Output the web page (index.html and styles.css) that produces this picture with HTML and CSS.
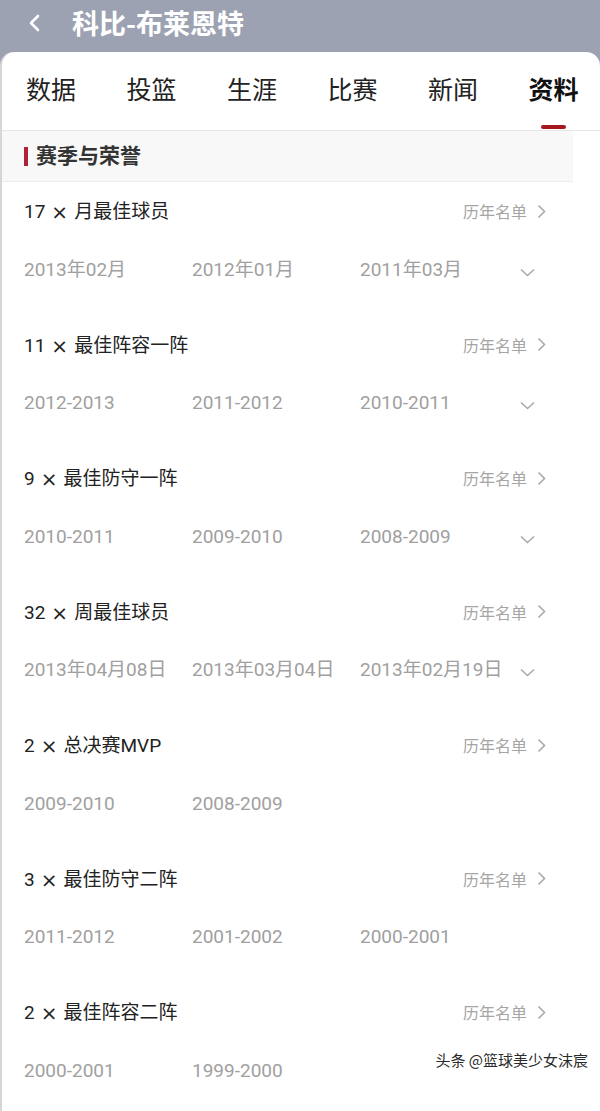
FILE: index.html
```html
<!DOCTYPE html>
<html lang="zh">
<head>
<meta charset="utf-8">
<link rel="stylesheet" href="styles.css">
</head>
<body>
<div class="page">
  <header class="topbar">
    <svg class="back" width="14" height="18" viewBox="0 0 14 18"><path d="M11 2 L4 9 L11 16" fill="none" stroke="#fff" stroke-width="2.6" stroke-linecap="round" stroke-linejoin="round"/></svg>
    <h1 class="title">科比-布莱恩特</h1>
  </header>
  <main class="card">
    <nav class="tabs">
      <span class="tab">数据</span>
      <span class="tab">投篮</span>
      <span class="tab">生涯</span>
      <span class="tab">比赛</span>
      <span class="tab">新闻</span>
      <span class="tab active">资料</span>
    </nav>
    <div class="section-head"><span class="bar"></span><span class="section-title">赛季与荣誉</span></div>

    <div class="item">
      <div class="item-top"><span class="item-title">17<span class="times">×</span>月最佳球员</span><span class="history">历年名单<svg class="chev-r" width="9" height="15" viewBox="0 0 9 15"><path d="M1.5 1.5 L7.5 7.5 L1.5 13.5" fill="none" stroke="#aaa" stroke-width="1.6"/></svg></span></div>
      <div class="dates"><span>2013年02月</span><span>2012年01月</span><span>2011年03月</span><svg class="chev-d" width="15" height="9" viewBox="0 0 15 9"><path d="M1 1.5 L7.5 7.5 L14 1.5" fill="none" stroke="#aaa" stroke-width="1.6"/></svg></div>
    </div>

    <div class="item">
      <div class="item-top"><span class="item-title">11<span class="times">×</span>最佳阵容一阵</span><span class="history">历年名单<svg class="chev-r" width="9" height="15" viewBox="0 0 9 15"><path d="M1.5 1.5 L7.5 7.5 L1.5 13.5" fill="none" stroke="#aaa" stroke-width="1.6"/></svg></span></div>
      <div class="dates"><span>2012-2013</span><span>2011-2012</span><span>2010-2011</span><svg class="chev-d" width="15" height="9" viewBox="0 0 15 9"><path d="M1 1.5 L7.5 7.5 L14 1.5" fill="none" stroke="#aaa" stroke-width="1.6"/></svg></div>
    </div>

    <div class="item">
      <div class="item-top"><span class="item-title">9<span class="times">×</span>最佳防守一阵</span><span class="history">历年名单<svg class="chev-r" width="9" height="15" viewBox="0 0 9 15"><path d="M1.5 1.5 L7.5 7.5 L1.5 13.5" fill="none" stroke="#aaa" stroke-width="1.6"/></svg></span></div>
      <div class="dates"><span>2010-2011</span><span>2009-2010</span><span>2008-2009</span><svg class="chev-d" width="15" height="9" viewBox="0 0 15 9"><path d="M1 1.5 L7.5 7.5 L14 1.5" fill="none" stroke="#aaa" stroke-width="1.6"/></svg></div>
    </div>

    <div class="item">
      <div class="item-top"><span class="item-title">32<span class="times">×</span>周最佳球员</span><span class="history">历年名单<svg class="chev-r" width="9" height="15" viewBox="0 0 9 15"><path d="M1.5 1.5 L7.5 7.5 L1.5 13.5" fill="none" stroke="#aaa" stroke-width="1.6"/></svg></span></div>
      <div class="dates"><span>2013年04月08日</span><span>2013年03月04日</span><span>2013年02月19日</span><svg class="chev-d" width="15" height="9" viewBox="0 0 15 9"><path d="M1 1.5 L7.5 7.5 L14 1.5" fill="none" stroke="#aaa" stroke-width="1.6"/></svg></div>
    </div>

    <div class="item">
      <div class="item-top"><span class="item-title">2<span class="times">×</span>总决赛MVP</span><span class="history">历年名单<svg class="chev-r" width="9" height="15" viewBox="0 0 9 15"><path d="M1.5 1.5 L7.5 7.5 L1.5 13.5" fill="none" stroke="#aaa" stroke-width="1.6"/></svg></span></div>
      <div class="dates"><span>2009-2010</span><span>2008-2009</span></div>
    </div>

    <div class="item">
      <div class="item-top"><span class="item-title">3<span class="times">×</span>最佳防守二阵</span><span class="history">历年名单<svg class="chev-r" width="9" height="15" viewBox="0 0 9 15"><path d="M1.5 1.5 L7.5 7.5 L1.5 13.5" fill="none" stroke="#aaa" stroke-width="1.6"/></svg></span></div>
      <div class="dates"><span>2011-2012</span><span>2001-2002</span><span>2000-2001</span></div>
    </div>

    <div class="item">
      <div class="item-top"><span class="item-title">2<span class="times">×</span>最佳阵容二阵</span><span class="history">历年名单<svg class="chev-r" width="9" height="15" viewBox="0 0 9 15"><path d="M1.5 1.5 L7.5 7.5 L1.5 13.5" fill="none" stroke="#aaa" stroke-width="1.6"/></svg></span></div>
      <div class="dates"><span>2000-2001</span><span>1999-2000</span></div>
    </div>
  </main>
  <div class="watermark">头条 @篮球美少女沫宸</div>
</div>
</body>
</html>
```

FILE: styles.css
```css
* { box-sizing: border-box; }
html, body { margin: 0; padding: 0; }
body {
  font-family: Roboto, "Noto Sans CJK SC", sans-serif;
  background: #fff;
  width: 600px;
  height: 1111px;
  overflow: hidden;
}
.page {
  position: relative;
  background: #9da2b2;
  height: 1111px;
}
.topbar {
  height: 52px;
  display: flex;
  align-items: center;
  padding-left: 27px;
}
.back { margin-right: 31px; margin-top: -6px; }
.title {
  margin: 0;
  color: #fff;
  font-size: 27px;
  font-weight: 700;
  line-height: 1;
  margin-top: -8px;
  font-family: "Noto Sans CJK SC", sans-serif;
}
.card {
  background: #fff;
  border-radius: 14px 14px 0 0;
  border-left: 2px solid #d6d6d6;
  height: 1059px;
}
.tabs {
  height: 79px;
  display: flex;
  gap: 50.5px;
  padding: 0 0 6px 24px;
  align-items: center;
  border-bottom: 1px solid #e6e6e6;
}
.tab {
  position: relative;
  width: 50px;
  font-size: 25px;
  color: #222;
  font-family: "Noto Sans CJK SC", sans-serif;
  line-height: 1;
  text-align: center;
}
.tab.active { font-weight: 700; color: #111; }
.tab.active::after {
  content: "";
  position: absolute;
  left: 12px;
  top: 49px;
  width: 25px;
  height: 4px;
  border-radius: 2px;
  background: #a8161e;
}
.section-head {
  height: 51px;
  width: 571px;
  background: #f8f8f8;
  border-bottom: 1px solid #ededed;
  display: flex;
  align-items: center;
  padding-left: 22px;
}
.bar {
  width: 4px;
  height: 19px;
  background: #b0213a;
  margin-right: 8px;
}
.section-title {
  font-size: 21px;
  font-weight: 700;
  color: #333;
  font-family: "Noto Sans CJK SC", sans-serif;
  line-height: 1;
  margin-top: -3px;
}
.item {
  height: 133.5px;
  padding: 16px 54px 0 22px;
}
.item-top {
  height: 26px;
  display: flex;
  justify-content: space-between;
  align-items: center;
}
.item-title {
  font-size: 19px;
  color: #222;
  line-height: 1;
  font-family: Roboto, "Noto Sans CJK SC", sans-serif;
}
.times {
  display: inline-block;
  font-family: "DejaVu Sans", sans-serif;
  font-size: 20px;
  margin: 0 6px 0 6px;
  transform: translateY(1px);
}
.history {
  display: flex;
  align-items: center;
  gap: 10px;
  font-size: 16px;
  color: #a5a5a5;
  line-height: 1;
  font-family: "Noto Sans CJK SC", sans-serif;
}
.chev-r { display: block; }
.dates {
  margin-top: 32px;
  height: 26px;
  display: grid;
  grid-template-columns: 168px 168px 160px 15px;
  align-items: center;
  font-size: 19px;
  color: #a0a0a0;
  line-height: 1;
}
.chev-d { display: block; margin-top: 6px; }
.watermark {
  position: absolute;
  right: 12px;
  top: 1049px;
  font-size: 15px;
  color: #2a2a2a;
  font-family: "Noto Sans CJK SC", sans-serif;
  text-shadow: 0 0 2px #fff, 0 0 2px #fff, 1px 1px 1px #fff;
}
```
